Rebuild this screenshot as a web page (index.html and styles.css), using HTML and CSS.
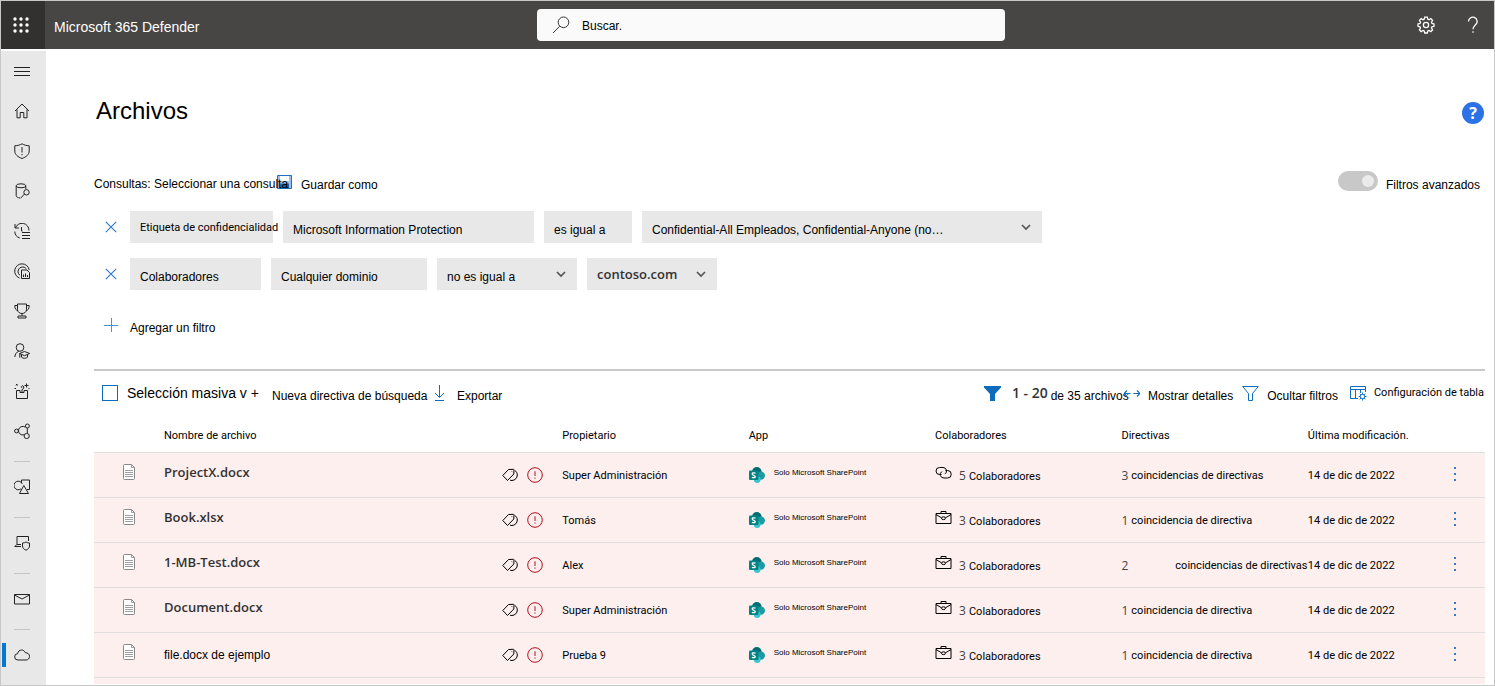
FILE: index.html
```html
<!DOCTYPE html>
<html lang="es">
<head>
<meta charset="utf-8">
<title>Archivos - Microsoft 365 Defender</title>
<link rel="stylesheet" href="styles.css">
</head>
<body>
<svg class="defs" aria-hidden="true">
  <symbol id="i-chevron" viewBox="0 0 10 10"><path d="M1 3l4 4 4-4" stroke-width="1.7"/></symbol>
  <symbol id="i-close" viewBox="0 0 12 12"><path d="M.8.8l10.4 10.4M11.200 .8L.8 11.200" stroke-width="1.100"/></symbol>
  <symbol id="i-file" viewBox="0 0 12 16"><path d="M.5 1.500q0-1 1-1h7l3 3v11q0 1-1 1h-9q-1 0-1-1z" fill="#fff"/><path d="M8.500.5v3h3M2 6.500h8M2 8.500h8M2 10.500h8M2 12.500h8" stroke-width=".8"/></symbol>
  <symbol id="i-tag" viewBox="0 0 16 16"><path d="M.8 8.500L6.500 2.500l5-.2.500.500-.2 4.200L5.500 13.500z M12.800 3.500c1.500.8 2.500 2.500 2.500 4.500 0 3-2.300 5.300-5.300 5.500-.8 0-1.500-.1-2-.4"/><path d="M9.800 4.500l.6.600"/></symbol>
  <symbol id="i-alert" viewBox="0 0 16 16"><circle cx="8" cy="8" r="7.300"/><path d="M8 4.300v4.700M8 10.500v1.200"/></symbol>
  <symbol id="i-share" viewBox="0 0 16 16"><g stroke="none"><circle cx="7.800" cy="4.800" r="4.800" fill="#036c70"/><circle cx="11.800" cy="8.600" r="4.200" fill="#1a9ba1"/><circle cx="8.200" cy="12.600" r="3.400" fill="#37c6d0"/><rect y="3.500" width="9.500" height="9.500" rx="1" fill="#038387"/></g><path d="M6.500 6.200Q3.200 5.100 3.200 7C3.200 8.500 6.300 8.100 6.300 9.700Q6.200 11.300 2.900 10.400" fill="none" stroke="#fff" stroke-width="1.300"/></symbol>
  <symbol id="i-link" viewBox="0 0 17 14"><path d="M6.500 8.500H4.500A3.500 3.500 0 0 1 4.500 1.500H8a3.500 3.500 0 0 1 2 6.400"/><path d="M10.500 4.500h2a3.500 3.500 0 0 1 0 7.500H9a3.700 3.500 0 0 1-2-6.500"/></symbol>
  <symbol id="i-case" viewBox="0 0 16 14"><path d="M.5 2.500h15v10H.5zM5.500 2.500v-2h5v2M.5 3.500L6 6.800M15.500 3.500L10 6.800"/><ellipse cx="8" cy="7.200" rx="2" ry="1.400"/></symbol>
  <symbol id="i-more" viewBox="0 0 4 16"><path d="M1 1h2v2H1zM1 7h2v2H1zM1 13h2v2H1z" fill="#3b78c4" stroke="none"/></symbol>
</svg>

<header class="topbar">
  <div class="brand">
    <button class="launcher" aria-label="Iniciador de aplicaciones"><svg width="18" height="18" viewBox="0 0 18 18"><g fill="#fff" stroke="none"><circle cx="3" cy="3" r="1.700"/><circle cx="9" cy="3" r="1.700"/><circle cx="15" cy="3" r="1.700"/><circle cx="3" cy="9" r="1.700"/><circle cx="9" cy="9" r="1.700"/><circle cx="15" cy="9" r="1.700"/><circle cx="3" cy="15" r="1.700"/><circle cx="9" cy="15" r="1.700"/><circle cx="15" cy="15" r="1.700"/></g></svg></button>
    <span class="product">Microsoft 365 Defender</span>
  </div>
  <label class="search">
    <svg width="18" height="18" viewBox="0 0 18 18"><circle cx="11.500" cy="6.300" r="5.300"/><path d="M7.700 10.200L1 17"/></svg>
    <input type="text" value="Buscar." aria-label="Buscar">
  </label>
  <div class="tools">
    <button class="tool" aria-label="Configuración"><svg width="18" height="18" viewBox="0 0 18 18"><path d="M7.700 1.200h2.600l.5 2 1.200.5 1.800-1.100 1.800 1.800-1.100 1.800.5 1.200 2 .5v2.400l-2 .5-.5 1.200 1.100 1.800-1.800 1.800-1.800-1.100-1.200.5-.5 2H7.700l-.5-2-1.200-.5-1.800 1.100-1.800-1.800 1.100-1.800-.5-1.200-2-.5V7.900l2-.5.500-1.200-1.100-1.800 1.800-1.800L6 3.700l1.200-.5z" stroke-width="1.300"/><circle cx="9" cy="9" r="2.600" stroke-width="1.300"/></svg></button>
    <button class="tool" aria-label="Ayuda"><svg width="12" height="18" viewBox="0 0 12 18"><path d="M1.500 5.500a4.300 4.300 0 1 1 7.500 2.800C7.500 10 6 10.700 6 13.200M6 15.200v1.600" stroke-width="1.300"/></svg></button>
  </div>
</header>

<div class="shell">
  <nav class="rail" aria-label="Navegación">
    <a class="nav" href="#" aria-label="Menú"><svg viewBox="0 0 16 16"><path d="M0 4.500h16M0 8.500h16M0 12.500h16"/></svg></a>
    <a class="nav" href="#" aria-label="Inicio"><svg viewBox="0 0 16 16"><path d="M1 8l7-7 7 7M3 6.500v8.300h3.200V9.500h3.600v5.300H13V6.500"/></svg></a>
    <a class="nav" href="#" aria-label="Incidentes"><svg viewBox="0 0 16 16"><path d="M8 .8C6 2 3.500 2.700.8 2.800V8c0 3.500 3 6 7.200 7.500 4.200-1.500 7.200-4 7.200-7.500V2.800C12.500 2.700 10 2 8 .8zM8 4v5.500M8 11v1.200"/></svg></a>
    <a class="nav" href="#" aria-label="Búsqueda"><svg viewBox="0 0 16 16"><ellipse cx="7" cy="2.800" rx="4.800" ry="2"/><path d="M2.200 2.800v10c0 1 1.600 1.900 3.800 2.200M11.800 2.800v3.400M10.500 11l-4 4.300"/><circle cx="12.500" cy="9.300" r="2.700"/></svg></a>
    <a class="nav" href="#" aria-label="Acciones"><svg viewBox="0 0 16 16"><path d="M1 1v4h4M1.500 4.700A7 7 0 0 1 15 7.500M7.500 4v4h1M.8 8.500a7 7 0 0 0 5 6.500M8 9.500h8M8 12.500h8M8 15.500h8"/></svg></a>
    <a class="nav" href="#" aria-label="Análisis de amenazas"><svg viewBox="0 0 16 16"><path d="M5.500 15A7.300 7.300 0 1 1 15.200 7M5.800 12.200a4.600 4.600 0 1 1 6.500-6.400M7.500 7h5.500l2.500 2.500v6h-8zM9.500 11.500v2.500M11.500 10.500V14M13.500 12v2"/></svg></a>
    <a class="nav" href="#" aria-label="Puntuación"><svg viewBox="0 0 16 16"><path d="M3.500 1h9v5.500c0 2.500-2 4-4.500 4s-4.500-1.500-4.500-4zM3.500 2.500H.8C.8 6 2 7.300 4 7.500M12.500 2.500h2.700C15.200 6 14 7.300 12 7.500M8 10.500V13M4 15v-2h8v2z"/></svg></a>
    <a class="nav" href="#" aria-label="Aprendizaje"><svg viewBox="0 0 16 16"><circle cx="6" cy="4.500" r="3.800"/><path d="M.8 14c.2-2.800 1.800-5 4-5.700M5.500 10.500l5-2 5.200 2-5.200 2.200zM7.500 11.500v2.700c1.500 1.500 4.500 1.500 6 0v-2.700M5.800 10.700v4"/></svg></a>
    <a class="nav" href="#" aria-label="Pruebas"><svg viewBox="0 0 16 16"><path d="M2.500 7.500v8h11v-8h-3.500v2H6v-2zM8 9V6.500c2 0 2.500-3.700.5-3.700-1.500 0-1.500 2-.2 2M12.500.5v4M10.500 2.500h4M2 1l1.500 1.500M3.500 1L2 2.500M14.500 5l1 1M.5 5.500h1.500"/></svg></a>
    <a class="nav" href="#" aria-label="Catálogo de asociados"><svg viewBox="0 0 16 16"><circle cx="2.500" cy="8" r="1.900"/><circle cx="13.400" cy="3" r="2"/><circle cx="12.700" cy="13" r="2.600"/><path d="M11.300 4.200A4.300 4.300 0 1 0 10 11.800M13.300 5v5.300"/></svg></a>
    <hr>
    <a class="nav" href="#" aria-label="Recursos"><svg viewBox="0 0 16 16"><path d="M7.500 4V1h8v9.500h-2.500M9.800 6.500l4.700 8H5.500zM7 9.800A4.300 4.300 0 1 1 8.300 5"/></svg></a>
    <hr>
    <a class="nav" href="#" aria-label="Puntos de conexión"><svg viewBox="0 0 16 16"><path d="M3 9.500V1.500h11.500V6M7 11.500H.8l2-2H7M12 7c-1 .7-2.300 1-3.500 1v3c0 2 1.500 3.300 3.500 4.200 2-.9 3.500-2.200 3.500-4.200V8c-1.200 0-2.500-.3-3.500-1z"/></svg></a>
    <hr>
    <a class="nav" href="#" aria-label="Correo"><svg viewBox="0 0 16 16"><path d="M.5 3.500h15v9.500H.5zM.5 4l7.500 4 7.500-4"/></svg></a>
    <hr>
    <a class="nav nav-active" href="#" aria-label="Aplicaciones en la nube" aria-current="page"><svg viewBox="0 0 16 16"><path d="M4 13a3.200 3.200 0 0 1-.3-6.400C4 4.500 5.500 3 7.500 3c1.800 0 3.200 1 3.800 2.700 2.500-.1 4.200 1.500 4.200 3.700S14 13 12 13z"/></svg></a>
  </nav>

  <main class="page">
    <div class="title-row">
      <h1>Archivos</h1>
      <button class="help" aria-label="Ayuda de la página">?</button>
    </div>

    <div class="query-row">
      <span class="query">Consultas: Seleccionar una consulta</span>
      <button class="link save"><svg width="15" height="14" viewBox="0 0 15 14" aria-hidden="true"><path d="M.5.5h14v13H.5z" fill="#9fc0ea" stroke="#1f6fc5"/><path d="M3 1h9v5H3z" fill="#fff" stroke="none"/><path d="M3 8.500h9V14H3z" fill="#1467b8" stroke="none"/></svg>Guardar como</button>
      <label class="advanced"><input type="checkbox" role="switch" checked>Filtros avanzados</label>
    </div>

    <div class="filters">
      <div class="filter">
        <button class="remove" aria-label="Quitar filtro"><svg width="12" height="12"><use href="#i-close"/></svg></button>
        <button class="chip chip-label">Etiqueta de confidencialidad</button>
        <button class="chip chip-low chip-service">Microsoft Information Protection</button>
        <button class="chip chip-low chip-op">es igual a</button>
        <div class="pick pick-wide"><select class="low" aria-label="Etiquetas"><option>Confidential-All Empleados, Confidential-Anyone (no…</option></select><svg width="10" height="10"><use href="#i-chevron"/></svg></div>
      </div>
      <div class="filter">
        <button class="remove" aria-label="Quitar filtro"><svg width="12" height="12"><use href="#i-close"/></svg></button>
        <button class="chip chip-low chip-people">Colaboradores</button>
        <button class="chip chip-low chip-domain">Cualquier dominio</button>
        <div class="pick pick-op"><select class="low" aria-label="Operador"><option>no es igual a</option></select><svg width="10" height="10"><use href="#i-chevron"/></svg></div>
        <div class="pick pick-value"><select class="strong" aria-label="Dominio"><option>contoso.com</option></select><svg width="10" height="10"><use href="#i-chevron"/></svg></div>
      </div>
    </div>
    <button class="link add"><svg width="14" height="14" viewBox="0 0 14 14" aria-hidden="true"><path d="M7.500 0v14M0 7.500h14" stroke="#4f8fd6"/></svg><span>Agregar un filtro</span></button>

    <div class="bar">
      <label class="bulk"><input type="checkbox">Selección masiva v +</label>
      <button class="link policy">Nueva directiva de búsqueda</button>
      <button class="link export"><svg width="11" height="16" viewBox="0 0 11 16" aria-hidden="true"><path d="M5.500 0v12M1 8l4.500 4.500L10 8M1 15.500h9"/></svg><span>Exportar</span></button>
      <div class="bar-right">
        <svg class="solid" width="17" height="15" viewBox="0 0 17 15" aria-hidden="true"><path d="M0 0h17v1.500L11 8v7H6V8L0 1.500z"/></svg>
        <span class="count"><b>1 - 20</b> <span>de 35 archivos</span></span>
        <button class="link details"><svg width="16" height="8" viewBox="0 0 16 8" aria-hidden="true"><path d="M0 4.500h6.500M3 1.500l-3 3 3 3M9.500 4.500H16M13 1.500l3 3-3 3" stroke-width="1.200"/></svg><span>Mostrar detalles</span></button>
        <button class="link hide"><svg width="17" height="15" viewBox="0 0 17 15" aria-hidden="true"><path d="M.7.500h15.600L10.500 7.500v7h-4v-7z"/></svg><span>Ocultar filtros</span></button>
        <button class="link config"><svg width="17" height="16" viewBox="0 0 17 16" aria-hidden="true"><path d="M8 13.500H.5V1.500h15V7M.5 4.500h15M5.500 4.500v9M10.500 4.500V8"/><circle cx="12.500" cy="11.500" r="2.200"/><path d="M12.500 7.500v1.800M12.500 13.700v1.800M8.700 11.500h1.600M14.700 11.500h1.800M9.700 8.700l1.200 1.200M14.100 13.100l1.200 1.200M15.300 8.700l-1.200 1.200M10.900 13.100l-1.200 1.200"/></svg>Configuración de tabla</button>
      </div>
    </div>

    <table class="files">
      <colgroup><col class="c-icon"><col><col class="c-flags"><col class="c-data"><col class="c-data"><col class="c-data"><col class="c-data"><col class="c-date"><col class="c-menu"></colgroup>
      <thead><tr><th></th><th>Nombre de archivo</th><th></th><th>Propietario</th><th>App</th><th>Colaboradores</th><th>Directivas</th><th>Última modificación.</th><th></th></tr></thead>
      <tbody>
        <tr><td class="up file"><svg width="12" height="16"><use href="#i-file"/></svg></td><td class="up name">ProjectX.docx</td><td><div class="flags"><svg width="16" height="16"><use href="#i-tag"/></svg><svg class="alert" width="16" height="16"><use href="#i-alert"/></svg></div></td><td class="low">Super Administración</td><td><div class="app"><svg width="16" height="16"><use href="#i-share"/></svg><span>Solo Microsoft SharePoint</span></div></td><td class="low"><div class="people"><svg width="17" height="14"><use href="#i-link"/></svg><b>5</b><span>Colaboradores</span></div></td><td class="low"><div class="match"><b>3</b><span>coincidencias de directivas</span></div></td><td class="low">14 de dic de 2022</td><td class="low menu"><button aria-label="Más acciones"><svg width="4" height="16"><use href="#i-more"/></svg></button></td></tr>
        <tr><td class="up file"><svg width="12" height="16"><use href="#i-file"/></svg></td><td class="up name">Book.xlsx</td><td><div class="flags"><svg width="16" height="16"><use href="#i-tag"/></svg><svg class="alert" width="16" height="16"><use href="#i-alert"/></svg></div></td><td class="low">Tomás</td><td><div class="app"><svg width="16" height="16"><use href="#i-share"/></svg><span>Solo Microsoft SharePoint</span></div></td><td class="low"><div class="people"><svg width="17" height="14"><use href="#i-case"/></svg><b>3</b><span>Colaboradores</span></div></td><td class="low"><div class="match"><b>1</b><span>coincidencia de directiva</span></div></td><td class="low">14 de dic de 2022</td><td class="low menu"><button aria-label="Más acciones"><svg width="4" height="16"><use href="#i-more"/></svg></button></td></tr>
        <tr><td class="up file"><svg width="12" height="16"><use href="#i-file"/></svg></td><td class="up name">1-MB-Test.docx</td><td><div class="flags"><svg width="16" height="16"><use href="#i-tag"/></svg><svg class="alert" width="16" height="16"><use href="#i-alert"/></svg></div></td><td class="low">Alex</td><td><div class="app"><svg width="16" height="16"><use href="#i-share"/></svg><span>Solo Microsoft SharePoint</span></div></td><td class="low"><div class="people"><svg width="17" height="14"><use href="#i-case"/></svg><b>3</b><span>Colaboradores</span></div></td><td class="low"><div class="match match-apart"><b>2</b><span>coincidencias de directivas</span></div></td><td class="low">14 de dic de 2022</td><td class="low menu"><button aria-label="Más acciones"><svg width="4" height="16"><use href="#i-more"/></svg></button></td></tr>
        <tr><td class="up file"><svg width="12" height="16"><use href="#i-file"/></svg></td><td class="up name">Document.docx</td><td><div class="flags"><svg width="16" height="16"><use href="#i-tag"/></svg><svg class="alert" width="16" height="16"><use href="#i-alert"/></svg></div></td><td class="low">Super Administración</td><td><div class="app"><svg width="16" height="16"><use href="#i-share"/></svg><span>Solo Microsoft SharePoint</span></div></td><td class="low"><div class="people"><svg width="17" height="14"><use href="#i-case"/></svg><b>3</b><span>Colaboradores</span></div></td><td class="low"><div class="match"><b>1</b><span>coincidencia de directiva</span></div></td><td class="low">14 de dic de 2022</td><td class="low menu"><button aria-label="Más acciones"><svg width="4" height="16"><use href="#i-more"/></svg></button></td></tr>
        <tr><td class="up file"><svg width="12" height="16"><use href="#i-file"/></svg></td><td class="sample">file.docx de ejemplo</td><td><div class="flags"><svg width="16" height="16"><use href="#i-tag"/></svg><svg class="alert" width="16" height="16"><use href="#i-alert"/></svg></div></td><td class="low">Prueba 9</td><td><div class="app"><svg width="16" height="16"><use href="#i-share"/></svg><span>Solo Microsoft SharePoint</span></div></td><td class="low"><div class="people"><svg width="17" height="14"><use href="#i-case"/></svg><b>3</b><span>Colaboradores</span></div></td><td class="low"><div class="match"><b>1</b><span>coincidencia de directiva</span></div></td><td class="low">14 de dic de 2022</td><td class="low menu"><button aria-label="Más acciones"><svg width="4" height="16"><use href="#i-more"/></svg></button></td></tr>
        <tr class="rest"><td colspan="9"></td></tr>
      </tbody>
    </table>
  </main>
</div>
</body>
</html>
```
FILE: styles.css
```css
* { box-sizing: border-box; }

body {
  margin: 0;
  min-height: 100vh;
  display: flex;
  flex-direction: column;
  border: 1px solid #c8c8c8;
  background: #fff;
  color: #000;
  font: 12px/16px "Liberation Sans", Arial, sans-serif;
}

svg { flex: none; fill: none; stroke: currentColor; }
.defs { position: absolute; width: 0; height: 0; }
button, input, select { font: inherit; color: inherit; }
button { padding: 0; border: 0; background: none; white-space: nowrap; cursor: pointer; }

/* Top bar */
.topbar {
  flex: none;
  display: grid;
  grid-template-columns: 35.9% 31.35% 1fr;
  align-items: center;
  height: 48px;
  background: #484644;
  color: #fff;
}
.brand { display: flex; align-items: center; height: 48px; }
.launcher {
  display: flex;
  align-items: center;
  justify-content: center;
  width: 44px;
  height: 48px;
  padding: 0 5px 1px 0;
  background: #323130;
}
.product { margin: 4px 0 0 9px; font-size: 14px; }
.search {
  display: flex;
  align-items: center;
  gap: 12px;
  height: 32px;
  padding: 0 15px;
  border-radius: 4px;
  background: #fafafa;
  color: #333;
}
.search input { flex: 1; min-width: 0; padding: 2px 0 0; border: 0; outline: 0; background: none; color: #000; }
.tools { display: flex; justify-content: flex-end; gap: 5px; }
.tool { display: flex; align-items: center; justify-content: center; width: 42px; height: 48px; }

/* Side rail */
.shell { flex: 1; display: flex; }
.rail { flex: none; width: 45px; margin-top: 2px; background: #e8e8e8; color: #222; }
.nav { display: flex; align-items: center; height: 40px; padding-left: 13px; color: inherit; }
.nav svg { width: 16px; height: 16px; }
.rail hr { width: 16px; height: 1px; margin: 10px 0 5px 13px; border: 0; background: #c4c4c4; }
.nav-active { padding-left: 1px; gap: 8px; }
.nav-active::before { content: ""; width: 4px; height: 24px; background: #0078d4; }

/* Page */
.page { flex: 1; min-width: 0; padding: 46px 9px 0 48px; }
.title-row { display: flex; align-items: center; justify-content: space-between; height: 34px; }
h1 { margin: 0 0 2px 2px; font-size: 24px; line-height: 32px; font-weight: 400; }
.help {
  width: 22px;
  height: 22px;
  margin: 2px 1px 0 0;
  border-radius: 50%;
  background: #2a72e5;
  color: #fff;
  font: bold 16px/22px "Open Sans", sans-serif;
}

.query-row { display: flex; align-items: center; height: 22px; margin-top: 44px; }
.query { position: relative; z-index: 1; width: 183px; white-space: nowrap; }
.link { display: flex; align-items: center; }
.link svg { color: #0f6cbd; }
.save { gap: 9px; margin-top: 2px; }
.save svg { margin-bottom: 6px; }
.advanced { display: flex; align-items: center; gap: 8px; margin: 2px 0 0 auto; padding-right: 5px; }
.advanced input {
  appearance: none;
  display: flex;
  align-items: center;
  justify-content: flex-end;
  width: 40px;
  height: 20px;
  margin: 0 0 8px;
  padding: 0 4px;
  border-radius: 10px;
  background: #c8c8c8;
}
.advanced input::before { content: ""; width: 12px; height: 12px; border-radius: 50%; background: #ebebeb; }

.filters { display: flex; flex-direction: column; gap: 15px; margin-top: 16px; }
.filter { display: flex; gap: 10px; height: 32px; }
.remove { display: flex; align-items: center; justify-content: center; width: 26px; padding-left: 8px; color: #2b78cf; }
.chip { padding: 0 0 0 10px; background: #e8e8e8; text-align: left; }
.chip-low { padding-top: 6px; }
.chip-label { position: relative; z-index: 1; width: 143px; padding-top: 2px; font-family: Roboto, sans-serif; font-size: 11px; }
.chip-service { width: 251px; }
.chip-op { width: 88px; }
.chip-people { width: 131px; }
.chip-domain { width: 156px; }
.pick { display: grid; align-items: center; background: #e8e8e8; }
.pick > * { grid-area: 1 / 1; }
.pick svg { justify-self: end; margin-right: 11px; color: #555; pointer-events: none; }
.pick select { appearance: none; width: 100%; height: 32px; padding: 0 30px 0 10px; border: 0; border-radius: 0; background: none; }
.pick select.low { padding-top: 6px; }
.pick select.strong { font: 600 13px/18px "Open Sans", sans-serif; color: #333; }
.pick-wide { width: 400px; }
.pick-op { width: 140px; }
.pick-value { width: 130px; }
.add { gap: 12px; height: 24px; margin: 23px 0 0 10px; }
.add span { padding-top: 8px; }

/* Table toolbar */
.bar { display: flex; align-items: center; height: 46px; margin-top: 32px; border-top: 2px solid #c8c8c8; white-space: nowrap; }
.bulk { display: flex; align-items: center; gap: 9px; width: 178px; padding-left: 8px; font-size: 14px; }
.bulk input { appearance: none; width: 16px; height: 16px; margin: 0; border: 1px solid #0f6cbd; }
.policy { width: 162px; padding-top: 5px; }
.export { gap: 12px; }
.link span, .count span { padding-top: 5px; }
.bar-right { display: flex; align-items: center; margin-left: auto; padding-right: 1px; }
.solid { fill: #0f6cbd; stroke: none; }
.count { display: flex; align-items: center; gap: 3px; width: 112px; margin-left: 11px; }
.count b { font: 600 14px/18px "Open Sans", sans-serif; color: #333; }
.details { gap: 8px; }
.hide { gap: 8px; margin-left: 9px; }
.config { gap: 7px; margin-left: 12px; font-family: Roboto, sans-serif; font-size: 11px; }

/* File list */
.files { width: 100%; table-layout: fixed; border-collapse: collapse; white-space: nowrap; font: 11px/16px Roboto, sans-serif; }
.c-icon { width: 70px; }
.c-flags { width: 60px; }
.c-data { width: 13.400%; }
.c-date { width: 9.500%; }
.c-menu { width: 45px; }
th { height: 37px; padding: 5px 0 0; font-weight: 400; text-align: left; }
td { height: 45px; padding: 0; border-top: 1px solid #e0dede; background: #fdefee; }
.rest td { height: 7px; }
td.up { padding-bottom: 5px; }
td.low { padding-top: 2px; }
.file { padding-left: 29px; color: #888; }
.file svg, .menu svg { display: block; }
.name { font: 600 13px/18px "Open Sans", sans-serif; color: #333; }
.sample { font: 12px/16px "Liberation Sans", Arial, sans-serif; }
.flags { display: flex; gap: 9px; }
.alert { color: #b10e1c; }
.app { display: flex; align-items: center; gap: 9px; font: 8px/12px "Liberation Sans", Arial, sans-serif; }
.app span { padding-bottom: 4px; }
.people, .match { display: flex; align-items: center; }
.people svg { margin: 0 7px 6px 0; }
.people span { margin-left: 3px; padding-top: 2px; }
.match span { margin-left: 3px; }
.match-apart span { margin-left: 47px; }
.people b, .match b { font: 400 12px/16px "Open Sans", sans-serif; color: #444; }
td.menu { padding: 4px 0 0 13px; }
```
